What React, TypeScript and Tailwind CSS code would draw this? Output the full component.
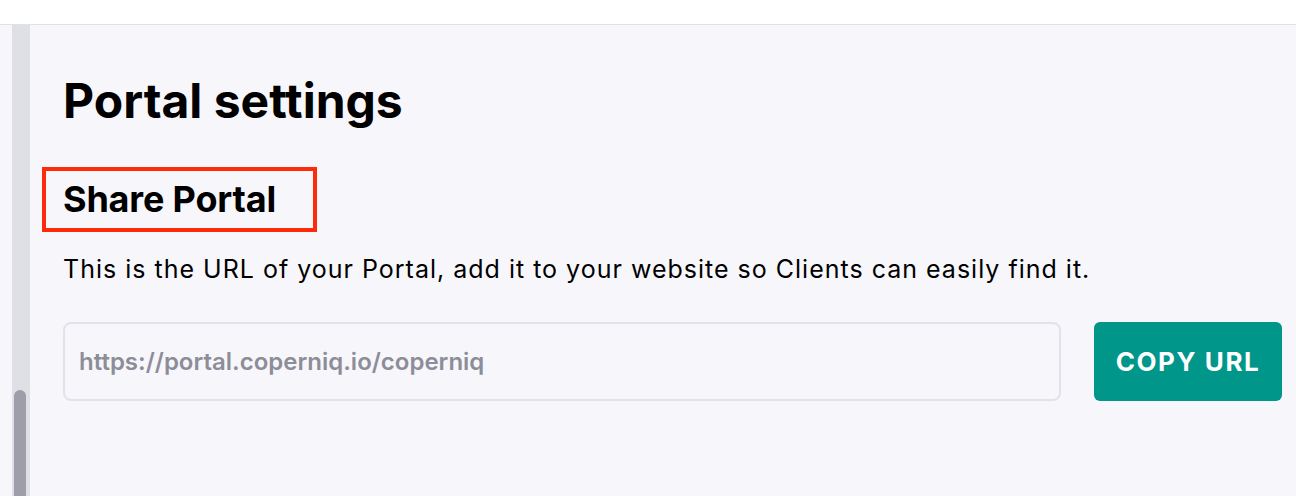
import React from 'react';

const App = () => {
  return (
    <div
      className="h-[496px] w-[1296px] overflow-hidden flex flex-col bg-[#f7f7fb]"
      style={{ fontFamily: 'Inter, "Noto Sans", sans-serif' }}
    >
      {/* Top bar */}
      <div className="h-[25px] shrink-0 bg-white border-b border-[#e1e1e8]" />

      <div className="flex flex-1 min-h-0">
        {/* Left gutter + scrollbar */}
        <div className="w-[12px] shrink-0" />
        <div className="w-[18px] shrink-0 bg-[#dfdfe6] flex flex-col">
          <div className="h-[365px] shrink-0" />
          <div className="ml-[2px] w-[12px] flex-1 rounded-t-full bg-[#9e9eaa]" />
        </div>

        {/* Content */}
        <div className="flex-1 pl-[33px] pr-[14px] pt-[52px] text-black">
          <h1 className="text-[48px] leading-none font-bold">Portal settings</h1>

          <div className="relative mt-[56px] w-fit">
            <h2 className="text-[36px] leading-none font-bold tracking-[-0.005em]">Share Portal</h2>
            {/* Annotation box */}
            <div className="absolute left-[-21px] top-[-14px] w-[275px] h-[65px] border-4 border-[#fe2b0b]" />
          </div>

          <p className="mt-[40px] text-[25px] leading-none tracking-[0.04em]">
            This is the URL of your Portal, add it to your website so Clients can easily find it.
          </p>

          <div className="mt-[40px] flex items-stretch gap-[33px]">
            <div className="w-[998px] h-[79px] shrink-0 flex items-center rounded-lg border-2 border-[#e2e2ea] px-[14px]">
              <span className="text-[24px] font-semibold text-[#8d8d99]">
                https://portal.coperniq.io/coperniq
              </span>
            </div>
            <button className="flex-1 h-[79px] rounded-md bg-[#00968a] text-white text-[26px] font-bold tracking-[0.06em]">
              COPY URL
            </button>
          </div>
        </div>
      </div>
    </div>
  );
};

export default App;
